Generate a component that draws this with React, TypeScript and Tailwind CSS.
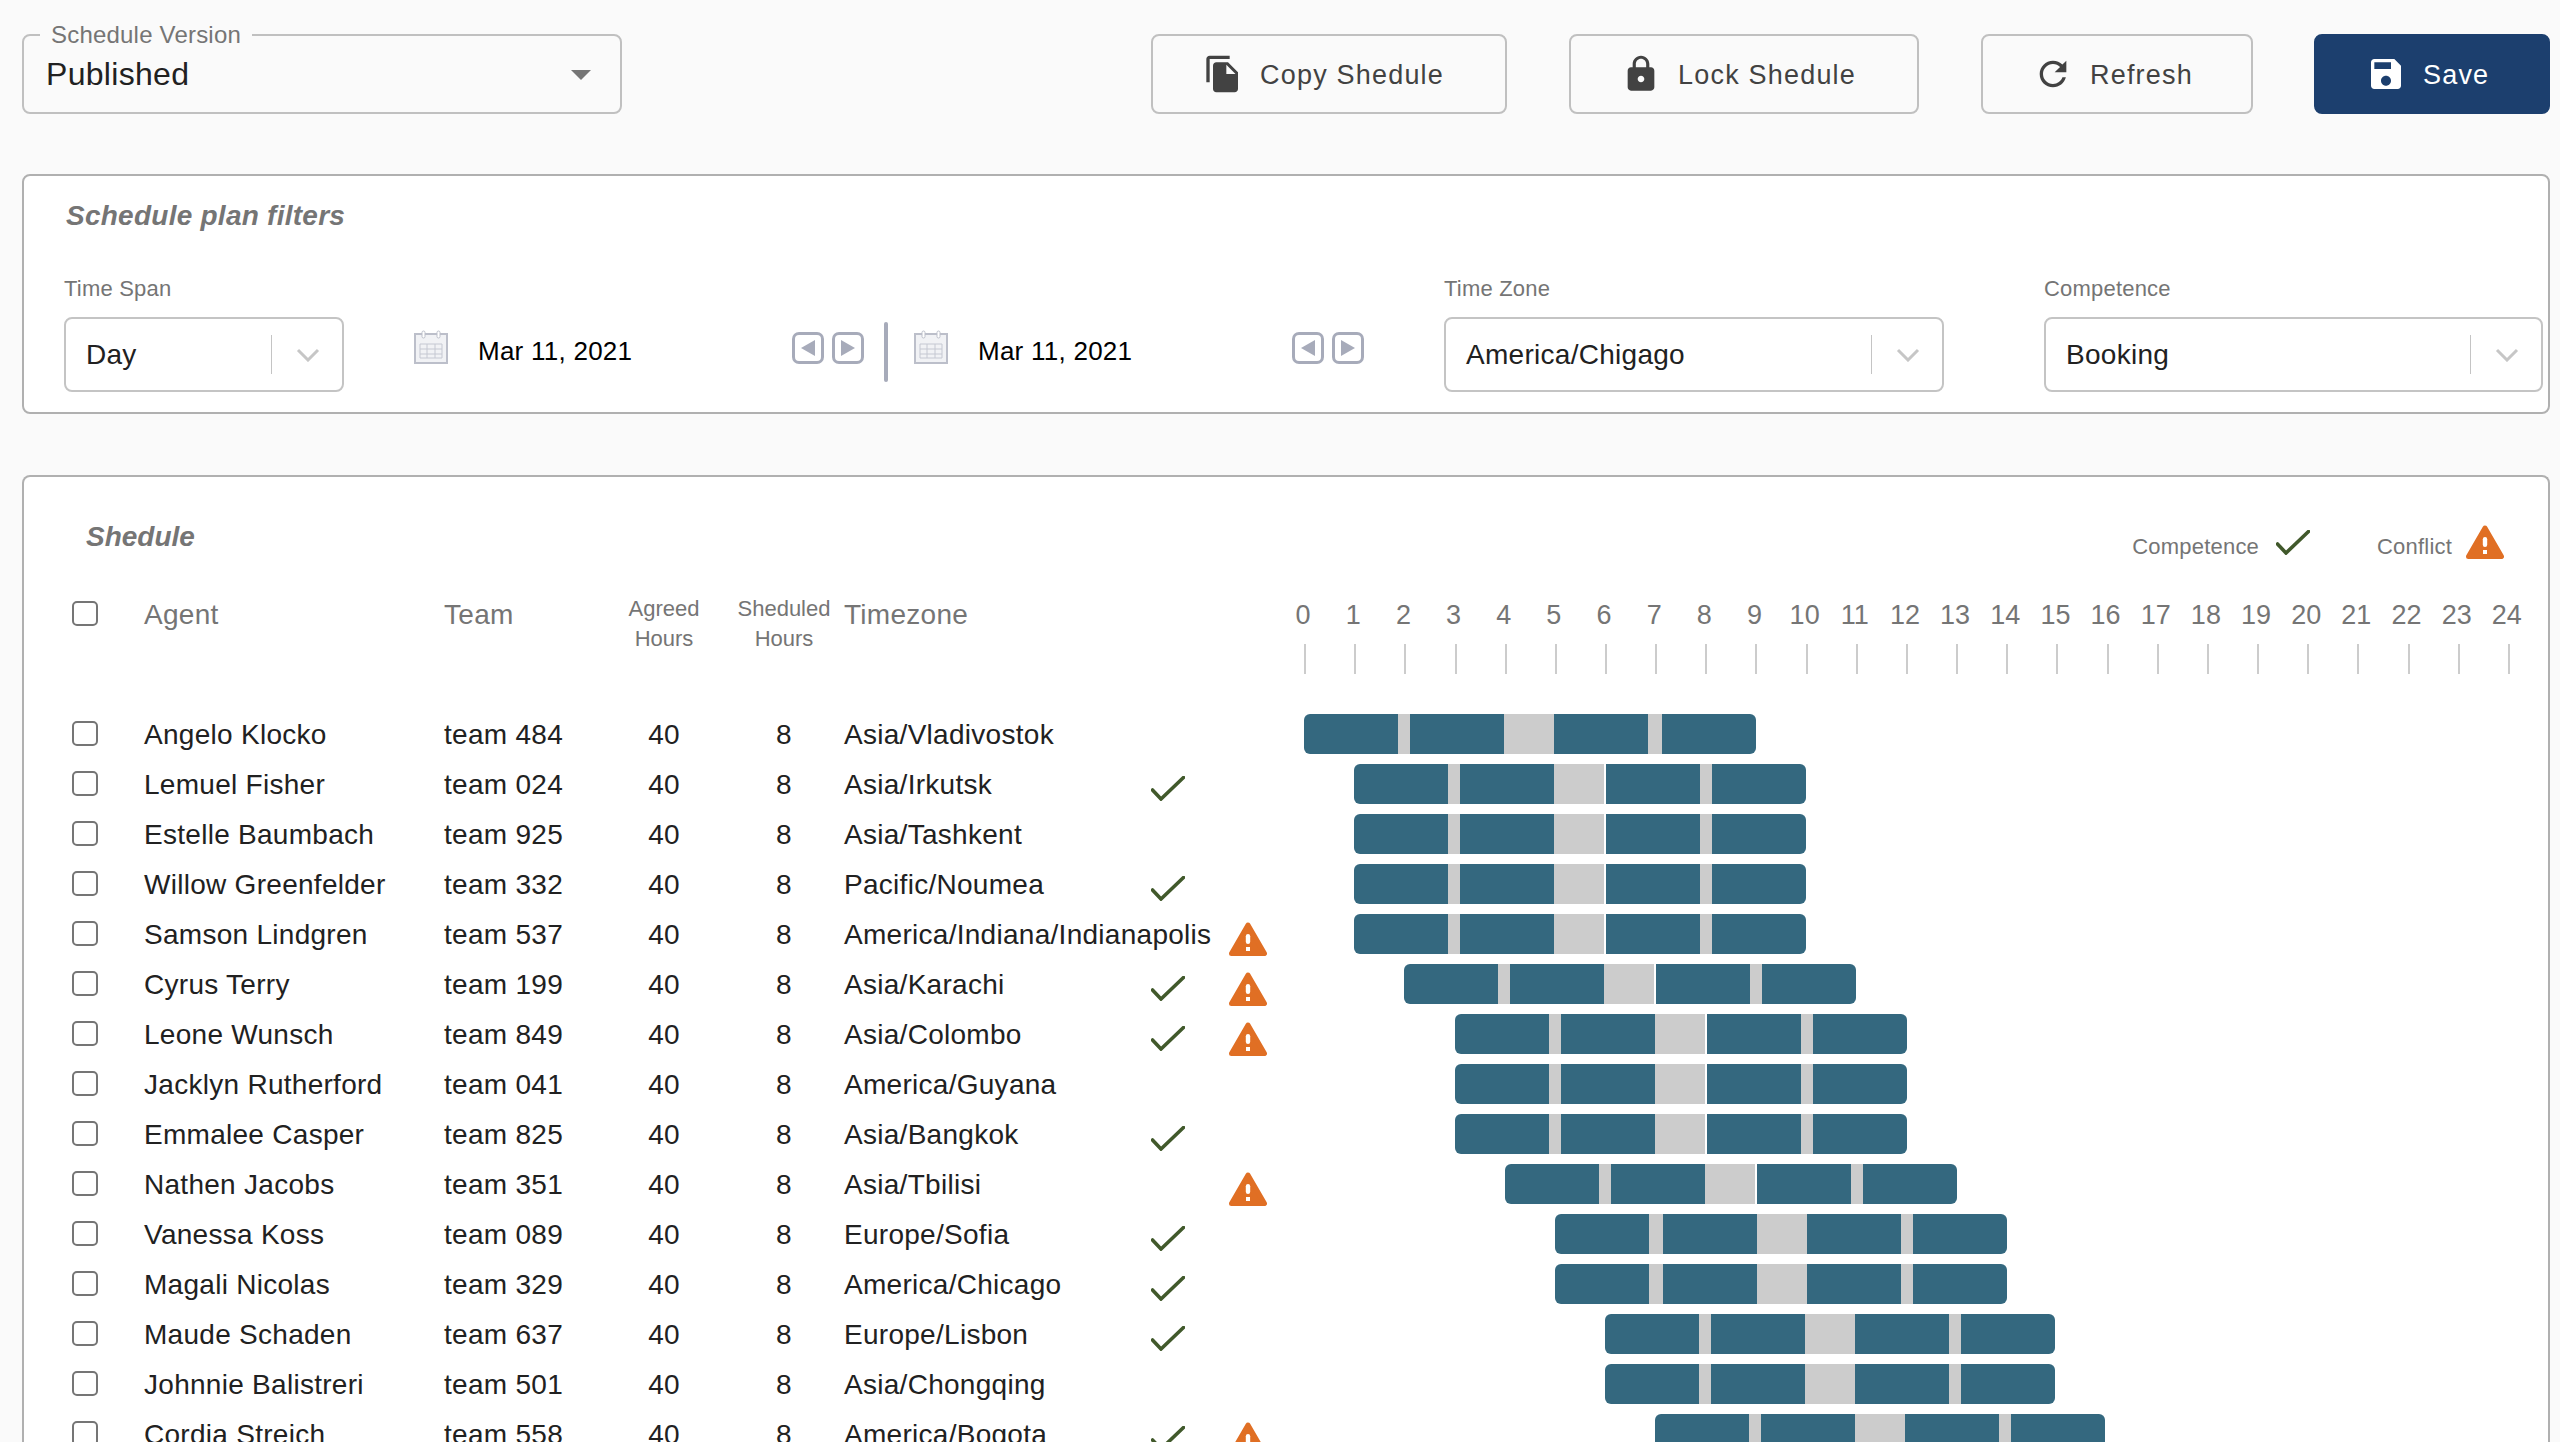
const agents = [
  { name: 'Angelo Klocko', team: 'team 484', zone: 'Asia/Vladivostok', start: 0, competence: false, conflict: false },
  { name: 'Lemuel Fisher', team: 'team 024', zone: 'Asia/Irkutsk', start: 1, competence: true, conflict: false },
  { name: 'Estelle Baumbach', team: 'team 925', zone: 'Asia/Tashkent', start: 1, competence: false, conflict: false },
  { name: 'Willow Greenfelder', team: 'team 332', zone: 'Pacific/Noumea', start: 1, competence: true, conflict: false },
  { name: 'Samson Lindgren', team: 'team 537', zone: 'America/Indiana/Indianapolis', start: 1, competence: false, conflict: true },
  { name: 'Cyrus Terry', team: 'team 199', zone: 'Asia/Karachi', start: 2, competence: true, conflict: true },
  { name: 'Leone Wunsch', team: 'team 849', zone: 'Asia/Colombo', start: 3, competence: true, conflict: true },
  { name: 'Jacklyn Rutherford', team: 'team 041', zone: 'America/Guyana', start: 3, competence: false, conflict: false },
  { name: 'Emmalee Casper', team: 'team 825', zone: 'Asia/Bangkok', start: 3, competence: true, conflict: false },
  { name: 'Nathen Jacobs', team: 'team 351', zone: 'Asia/Tbilisi', start: 4, competence: false, conflict: true },
  { name: 'Vanessa Koss', team: 'team 089', zone: 'Europe/Sofia', start: 5, competence: true, conflict: false },
  { name: 'Magali Nicolas', team: 'team 329', zone: 'America/Chicago', start: 5, competence: true, conflict: false },
  { name: 'Maude Schaden', team: 'team 637', zone: 'Europe/Lisbon', start: 6, competence: true, conflict: false },
  { name: 'Johnnie Balistreri', team: 'team 501', zone: 'Asia/Chongqing', start: 6, competence: false, conflict: false },
  { name: 'Cordia Streich', team: 'team 558', zone: 'America/Bogota', start: 7, competence: true, conflict: true },
];

const HOUR_WIDTH = 50.17;
const hours = Array.from({ length: 25 }, (_, i) => i);
const gridCols = 'grid grid-cols-[72px_300px_160px_120px_120px_307px_78px_75px_1fr] pl-[48px]';

function CheckIcon({ className = '' }: { className?: string }) {
  return (
    <svg width="34" height="25" viewBox="0 0 34 25" fill="none" className={className}>
      <path d="M1.5 14L10 23L32.5 1.5" stroke="#41592b" strokeWidth="3.6" strokeLinecap="round" strokeLinejoin="miter" />
    </svg>
  );
}

function ConflictIcon({ className = '' }: { className?: string }) {
  return (
    <svg width="38" height="34" viewBox="0 0 38 34" className={className}>
      <path d="M19 3L35.5 31.5H2.5Z" fill="#e06f24" stroke="#e06f24" strokeWidth="5" strokeLinejoin="round" />
      <rect x="16.8" y="12" width="4.4" height="10" rx="2.2" fill="#fff" />
      <rect x="17" y="25" width="4" height="4" fill="#fff" />
    </svg>
  );
}

function Chevron() {
  return (
    <svg width="24" height="14" viewBox="0 0 24 14" fill="none">
      <path d="M2 2L12 12L22 2" stroke="#c6c6c6" strokeWidth="3" />
    </svg>
  );
}

function CalendarIcon() {
  return (
    <svg width="34" height="34" viewBox="0 0 34 34" fill="none">
      <rect x="1" y="4" width="32" height="29" fill="#f1f2f5" stroke="#bcbfca" strokeWidth="2" />
      <rect x="8" y="1" width="3" height="7" rx="1.5" fill="#fff" stroke="#bcbfca" />
      <rect x="23" y="1" width="3" height="7" rx="1.5" fill="#fff" stroke="#bcbfca" />
      <path d="M6 14H28V28H6ZM6 19H28M6 24H28M13 14V28M21 14V28" stroke="#c5c8d2" strokeWidth="1" />
    </svg>
  );
}

function ArrowButton({ dir }: { dir: 'left' | 'right' }) {
  return (
    <div className="flex h-[32px] w-[32px] items-center justify-center rounded-[7px] border-[3px] border-[#a7abba] bg-white">
      <svg width="16" height="18" viewBox="0 0 16 18">
        <path d={dir === 'left' ? 'M15 1V17L1 9Z' : 'M1 1V17L15 9Z'} fill="#a7abba" />
      </svg>
    </div>
  );
}

function DatePicker() {
  return (
    <div className="flex w-[450px] items-start">
      <div className="mt-[13px]">
        <CalendarIcon />
      </div>
      <span className="ml-[30px] mt-[19px] text-[26px] leading-[30px] tracking-[0.25px] text-black">Mar 11, 2021</span>
      <div className="ml-auto mt-[15px] flex gap-[8px]">
        <ArrowButton dir="left" />
        <ArrowButton dir="right" />
      </div>
    </div>
  );
}

function FilterSelect({ label, value, width }: { label: string; value: string; width: string }) {
  return (
    <div className={width}>
      <div className="text-[22px] leading-[26px] tracking-[0.2px] text-[#757575]">{label}</div>
      <div className="mt-[15px] flex h-[75px] items-center rounded-[8px] border-2 border-[#c4c4c4] bg-white pl-[20px] pr-[22px]">
        <span className="text-[28px] leading-[32px] tracking-[0.28px] text-[#212121]">{value}</span>
        <div className="ml-auto h-[39px] w-[1px] bg-[#c4c4c4]" />
        <div className="ml-[24px] flex">
          <Chevron />
        </div>
      </div>
    </div>
  );
}

function ActionButton({ label, width, path, primary }: { label: string; width: string; path: string; primary?: boolean }) {
  return (
    <button
      className={`flex h-[80px] items-center gap-[17px] rounded-[8px] pl-[50px] text-[27px] tracking-[1.2px] ${width} ${
        primary ? 'border-2 border-[#1c3f6e] bg-[#1c3f6e] text-white' : 'border-2 border-[#c0c0c0] bg-[#fafafa] text-[#424242]'
      }`}
    >
      <svg width="40" height="40" viewBox="0 0 24 24" fill="currentColor" className="shrink-0">
        <path d={path} />
      </svg>
      <span className="pt-[2px]">{label}</span>
    </button>
  );
}

function ShiftBar({ start }: { start: number }) {
  const spaced = start >= 1 && start <= 4;
  const secondBreak = start === 0 ? 14 : 12;
  const firstBreak = start === 5 ? 14 : 12;
  return (
    <div className="flex h-10 overflow-hidden rounded-[6px]" style={{ marginLeft: start * HOUR_WIDTH, width: spaced || start === 0 || start === 5 ? 452 : 450 }}>
      <div className="w-[94px] bg-[#34687f]" />
      <div className="bg-[#cccccc]" style={{ width: firstBreak }} />
      <div className="w-[94px] bg-[#34687f]" />
      <div className="w-[50px] bg-[#cccccc]" />
      {spaced && <div className="w-[2px] bg-white" />}
      <div className="w-[94px] bg-[#34687f]" />
      <div className="bg-[#cccccc]" style={{ width: secondBreak }} />
      <div className="w-[94px] bg-[#34687f]" />
    </div>
  );
}

export default function App() {
  return (
    <div className="h-[1442px] overflow-hidden bg-[#fafafa] pl-[22px] pr-[10px] pt-[34px] font-['Liberation_Sans',Arial,sans-serif]">
      {/* Top actions */}
      <div className="flex items-start">
        <div className="relative flex h-[80px] w-[600px] items-center rounded-[8px] border-2 border-[#c0c0c0] pl-[22px] pr-[29px]">
          <span className="absolute -top-[15px] left-[16px] bg-[#fafafa] px-[11px] text-[24px] leading-[28px] tracking-[0.2px] text-[#757575]">Schedule Version</span>
          <span className="text-[32px] leading-[36px] tracking-[0.3px] text-[#212121]">Published</span>
          <svg width="20" height="10" viewBox="0 0 20 10" className="ml-auto mt-[1px]">
            <path d="M0 0H20L10 10Z" fill="#757575" />
          </svg>
        </div>
        <div className="ml-auto flex gap-[62px]">
          <ActionButton
            label="Copy Shedule"
            width="w-[356px]"
            path="M16 1H4c-1.1 0-2 .9-2 2v14h2V3h12V1zm-1 4l6 6v10c0 1.1-.9 2-2 2H7.99C6.89 23 6 22.1 6 21l.01-14c0-1.1.89-2 2-2h7zm-1 7h5.5L14 6.5V12z"
          />
          <ActionButton
            label="Lock Shedule"
            width="w-[350px]"
            path="M18 8h-1V6c0-2.76-2.24-5-5-5S7 3.24 7 6v2H6c-1.1 0-2 .9-2 2v10c0 1.1.9 2 2 2h12c1.1 0 2-.9 2-2V10c0-1.1-.9-2-2-2zm-6 9c-1.1 0-2-.9-2-2s.9-2 2-2 2 .9 2 2-.9 2-2 2zm3.1-9H8.9V6c0-1.71 1.39-3.1 3.1-3.1 1.71 0 3.1 1.39 3.1 3.1v2z"
          />
          <div className="flex gap-[61px]">
            <ActionButton
              label="Refresh"
              width="w-[272px]"
              path="M17.65 6.35C16.2 4.9 14.21 4 12 4c-4.42 0-7.99 3.58-7.99 8s3.57 8 7.99 8c3.73 0 6.84-2.55 7.73-6h-2.08c-.82 2.33-3.04 4-5.65 4-3.31 0-6-2.69-6-6s2.69-6 6-6c1.66 0 3.14.69 4.22 1.78L13 11h7V4l-2.35 2.35z"
            />
            <ActionButton
              primary
              label="Save"
              width="w-[236px]"
              path="M17 3H5c-1.11 0-2 .9-2 2v14c0 1.1.89 2 2 2h14c1.1 0 2-.9 2-2V7l-4-4zm-5 16c-1.66 0-3-1.34-3-3s1.34-3 3-3 3 1.34 3 3-1.34 3-3 3zm3-10H5V5h10v4z"
            />
          </div>
        </div>
      </div>

      {/* Filters */}
      <section className="mt-[60px] h-[240px] rounded-[8px] border-2 border-[#b0b0b0] bg-white pl-[40px] pt-[24px]">
        <h2 className="pl-[2px] text-[28px] font-bold italic leading-[32px] tracking-[0.25px] text-[#757575]">Schedule plan filters</h2>
        <div className="mt-[44px] flex items-start">
          <FilterSelect label="Time Span" value="Day" width="w-[280px]" />
          <div className="ml-[70px] flex items-start pt-[41px]">
            <DatePicker />
            <div className="ml-[20px] mr-[26px] mt-[5px] h-[60px] w-[4px] rounded-[2px] bg-[#a7abba]" />
            <DatePicker />
          </div>
          <div className="ml-[80px]">
            <FilterSelect label="Time Zone" value="America/Chigago" width="w-[500px]" />
          </div>
          <div className="ml-[100px]">
            <FilterSelect label="Competence" value="Booking" width="w-[499px]" />
          </div>
        </div>
      </section>

      {/* Schedule */}
      <section className="mt-[61px] rounded-t-[8px] border-x-2 border-t-2 border-[#b0b0b0] bg-white pb-[40px]">
        <div className="flex h-[119px] items-start justify-between pl-[62px] pr-[44px]">
          <h2 className="mt-[44px] text-[28px] font-bold italic leading-[32px] text-[#757575]">Shedule</h2>
          <div className="mt-[47px] flex items-center text-[22px] leading-[26px] tracking-[0.2px] text-[#757575]">
            <span className="mt-[10px]">Competence</span>
            <CheckIcon className="ml-[17px]" />
            <span className="ml-[67px] mt-[10px]">Conflict</span>
            <ConflictIcon className="ml-[14px]" />
          </div>
        </div>

        <div className={`${gridCols} h-[113px] items-start text-[#757575]`}>
          <input type="checkbox" className="mt-[5px] h-[25px] w-[26px] appearance-none rounded-[5px] border-2 border-[#757575] bg-white" />
          <div className="text-[28px] leading-[38px] tracking-[0.28px]">Agent</div>
          <div className="text-[28px] leading-[38px] tracking-[0.28px]">Team</div>
          <div className="-mt-[2px] text-center text-[22px] leading-[30px]">
            Agreed
            <br />
            Hours
          </div>
          <div className="-mt-[2px] text-center text-[22px] leading-[30px]">
            Sheduled
            <br />
            Hours
          </div>
          <div className="text-[28px] leading-[38px] tracking-[0.28px]">Timezone</div>
          <div />
          <div />
          <div className="-ml-[26px] flex">
            {hours.map((hour) => (
              <div key={hour} className="flex w-[50.17px] shrink-0 flex-col items-center">
                <span className="text-[27px] leading-[38px]">{hour}</span>
                <span className="ml-[4px] mt-[10px] h-[30px] w-[2px] bg-[#cccccc]" />
              </div>
            ))}
          </div>
        </div>

        {agents.map((agent) => (
          <div key={agent.name} className={`${gridCols} h-[50px] items-center text-[28px] leading-[36px] tracking-[0.28px] text-[#212121]`}>
            <input type="checkbox" className="-mt-[1px] h-[25px] w-[26px] appearance-none rounded-[5px] border-2 border-[#757575] bg-white" />
            <div className="mt-[2px] whitespace-nowrap">{agent.name}</div>
            <div className="mt-[2px]">{agent.team}</div>
            <div className="mt-[2px] text-center">40</div>
            <div className="mt-[2px] text-center">8</div>
            <div className="mt-[2px] whitespace-nowrap">{agent.zone}</div>
            <div className="mt-[9px] flex">{agent.competence && <CheckIcon />}</div>
            <div className="mt-[10px] flex">{agent.conflict && <ConflictIcon />}</div>
            <ShiftBar start={agent.start} />
          </div>
        ))}
      </section>
    </div>
  );
}
